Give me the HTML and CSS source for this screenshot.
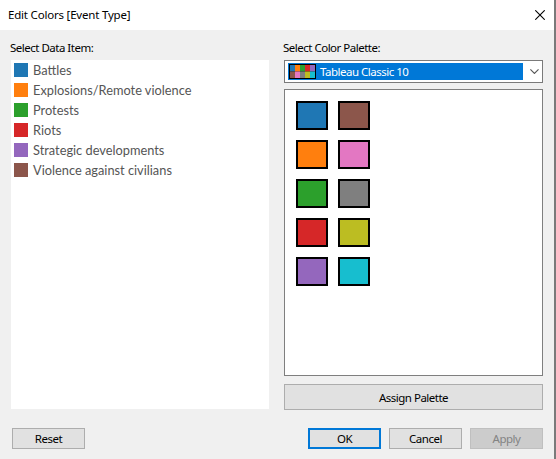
FILE: index.html
```html
<!DOCTYPE html>
<html>
<head>
<meta charset="utf-8">
<link rel="stylesheet" href="styles.css">
</head>
<body>
<div class="window">
  <div class="titlebar">
    <span class="title">Edit Colors [Event Type]</span>
    <svg class="close" width="10" height="10" viewBox="0 0 10 10"><path d="M0.3 0.3 L9.7 9.7 M9.7 0.3 L0.3 9.7" stroke="#000" stroke-width="1.1" fill="none"/></svg>
  </div>
  <div class="main">
    <div class="col left">
      <div class="label">Select Data Item:</div>
      <ul class="items">
        <li><span class="sw" style="background:#1f77b4"></span>Battles</li>
        <li><span class="sw" style="background:#ff7f0e"></span>Explosions/Remote violence</li>
        <li><span class="sw" style="background:#2ca02c"></span>Protests</li>
        <li><span class="sw" style="background:#d62728"></span>Riots</li>
        <li><span class="sw" style="background:#9467bd"></span>Strategic developments</li>
        <li><span class="sw" style="background:#8c564b"></span>Violence against civilians</li>
      </ul>
    </div>
    <div class="col right">
      <div class="label">Select Color Palette:</div>
      <div class="select">
        <div class="sel-bar">
          <svg class="pal-icon" width="27" height="15" viewBox="0 0 27 15">
            <rect x="0" y="0" width="27" height="15" fill="#000"/>
            <rect x="1" y="1" width="5" height="6.5" fill="#1f77b4"/>
            <rect x="6" y="1" width="5" height="6.5" fill="#ff7f0e"/>
            <rect x="11" y="1" width="5" height="6.5" fill="#2ca02c"/>
            <rect x="16" y="1" width="5" height="6.5" fill="#d62728"/>
            <rect x="21" y="1" width="5" height="6.5" fill="#9467bd"/>
            <rect x="1" y="7.5" width="5" height="6.5" fill="#8c564b"/>
            <rect x="6" y="7.5" width="5" height="6.5" fill="#e377c2"/>
            <rect x="11" y="7.5" width="5" height="6.5" fill="#7f7f7f"/>
            <rect x="16" y="7.5" width="5" height="6.5" fill="#bcbd22"/>
            <rect x="21" y="7.5" width="5" height="6.5" fill="#17becf"/>
          </svg>
          <span class="sel-text">Tableau Classic 10</span>
        </div>
        <svg class="chev" width="9" height="5" viewBox="0 0 9 5"><path d="M0.4 0.4 L4.5 4.5 L8.6 0.4" stroke="#555" stroke-width="1.1" fill="none"/></svg>
      </div>
      <div class="palette">
        <div class="grid">
          <span class="cell" style="background:#1f77b4"></span>
          <span class="cell" style="background:#8c564b"></span>
          <span class="cell" style="background:#ff7f0e"></span>
          <span class="cell" style="background:#e377c2"></span>
          <span class="cell" style="background:#2ca02c"></span>
          <span class="cell" style="background:#7f7f7f"></span>
          <span class="cell" style="background:#d62728"></span>
          <span class="cell" style="background:#bcbd22"></span>
          <span class="cell" style="background:#9467bd"></span>
          <span class="cell" style="background:#17becf"></span>
        </div>
      </div>
      <button class="btn assign">Assign Palette</button>
    </div>
  </div>
  <div class="footer">
    <button class="btn">Reset</button>
    <div class="spacer"></div>
    <button class="btn ok">OK</button>
    <button class="btn">Cancel</button>
    <button class="btn disabled">Apply</button>
  </div>
</div>
</body>
</html>
```
FILE: styles.css
```css
html, body {
  margin: 0;
  padding: 0;
  background: #f0f0f0;
}
.window {
  width: 556px;
  height: 459px;
  box-sizing: border-box;
  border-right: 2px solid #7a7a7a;
  background: #f0f0f0;
  display: flex;
  flex-direction: column;
  font-family: "Noto Sans", "Open Sans", sans-serif;
  font-size: 11.5px;
  letter-spacing: -0.5px;
  color: #000;
}
.titlebar {
  height: 30px;
  background: #fff;
  display: flex;
  align-items: center;
  padding: 0 9px 0 8px;
  box-sizing: border-box;
}
.title {
  flex: 1;
  font-size: 11.5px;
  letter-spacing: -0.2px;
  padding-bottom: 1px;
}
.close {
  margin-top: -1px;
}
.main {
  display: flex;
  padding: 10px 0 0 11px;
  gap: 15px;
}
.col {
  display: flex;
  flex-direction: column;
}
.left { width: 258px; }
.right { width: 259px; }
.label {
  height: 20px;
  line-height: 15px;
}
.left .label { margin-left: -1px; }
.right .label { margin-left: -1px; }
.items {
  list-style: none;
  margin: 0;
  padding: 3px 0 0 3px;
  background: #fff;
  height: 349px;
  box-sizing: border-box;
  font-family: "Lato", sans-serif;
  font-size: 12.8px;
  letter-spacing: 0;
  color: #555;
}
.items li {
  height: 20px;
  line-height: 15px;
  display: flex;
  align-items: flex-start;
}
.sw {
  width: 14px;
  height: 14px;
  margin-right: 5px;
  flex: none;
}
.select {
  height: 23px;
  border: 1px solid #7a7a7a;
  background: #fff;
  box-sizing: border-box;
  display: flex;
  align-items: center;
  padding: 2px 3px 2px 3px;
}
.sel-bar {
  width: 238px;
  height: 17px;
  background: #0078d7;
  display: flex;
  align-items: center;
  padding-left: 1px;
  box-sizing: border-box;
}
.pal-icon { flex: none; }
.sel-text {
  color: #fff;
  margin-left: 4px;
}
.chev {
  margin-left: 7px;
}
.palette {
  margin-top: 6px;
  height: 287px;
  border: 1px solid #7f7f7f;
  background: #fff;
  box-sizing: border-box;
  padding: 11px 0 0 11px;
}
.grid {
  display: grid;
  grid-template-columns: 32px 32px;
  grid-auto-rows: 29px;
  column-gap: 10px;
  row-gap: 10px;
}
.cell {
  border: 2px solid #000;
  box-sizing: border-box;
}
.btn {
  font-family: "Noto Sans", "Open Sans", sans-serif;
  font-size: 11.5px;
  letter-spacing: -0.5px;
  background: #e1e1e1;
  border: 1px solid #adadad;
  color: #000;
  padding: 0;
  margin: 0;
  box-sizing: border-box;
}
.assign {
  margin-top: 8px;
  height: 26px;
  width: 259px;
}
.footer {
  display: flex;
  padding: 18px 0 0 12px;
  gap: 8px;
}
.footer .btn {
  width: 73px;
  height: 21px;
  line-height: 17px;
}
.spacer { flex: 1; }
.footer .ok {
  border: 2px solid #0078d7;
}
.footer .btn.disabled {
  background: #cccccc;
  border-color: #bfbfbf;
  color: #838383;
  margin-right: 11px;
}
```
